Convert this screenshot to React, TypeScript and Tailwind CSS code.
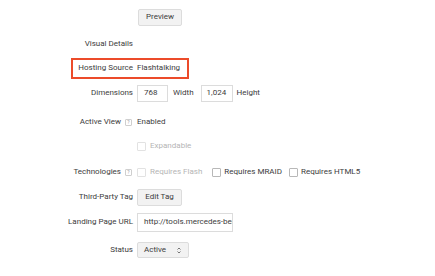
import React from 'react';

const Label: React.FC<{ text: string; help?: boolean }> = ({ text, help }) => (
  <div className="w-[133px] shrink-0 flex items-center justify-end text-[#3c3c3c]">
    <span>{text}</span>
    {help && (
      <span className="ml-[4px] mr-[1px] w-[7px] h-[7px] border border-[#cfcfcf] rounded-[1px] flex items-center justify-center text-[5px] leading-none text-[#999]">
        ?
      </span>
    )}
  </div>
);

const Box: React.FC<{ disabled?: boolean }> = ({ disabled }) => (
  <span
    className={`inline-block w-[9px] h-[9px] rounded-[1px] bg-white border ${
      disabled ? 'border-[#e2e2e2]' : 'border-[#b8b8b8]'
    }`}
  />
);

const Row: React.FC<{ h: string; label?: string; help?: boolean; children?: React.ReactNode }> = ({
  h,
  label,
  help,
  children,
}) => (
  <div className={`flex items-center ${h}`}>
    <Label text={label ?? ''} help={help} />
    <div className="ml-[4px] flex items-center whitespace-nowrap">{children}</div>
  </div>
);

const btn =
  'h-[17px] flex items-center justify-center whitespace-nowrap bg-[#f2f2f2] border border-[#dcdcdc] rounded-[2px] text-[#3c3c3c]';

export default function App() {
  return (
    <div
      className="w-[435px] h-[276px] bg-white overflow-hidden text-[8px] leading-none pt-[4px] text-[#3c3c3c]"
      style={{ fontFamily: 'Roboto, "Liberation Sans", sans-serif' }}
    >
      <Row h="h-[26px]">
        <button className={`${btn} w-[44px] ml-[1px]`}>Preview</button>
      </Row>

      <Row h="h-[28px]" label="Visual Details" />

      <div className="relative">
        <Row h="h-[20px]" label="Hosting Source">
          <span>Flashtalking</span>
        </Row>
        <div className="absolute left-[71px] top-0 w-[118px] h-[21px] border-[2.5px] border-[#ec4b2a]" />
      </div>

      <Row h="h-[30px]" label="Dimensions">
        <div className="w-[31px] h-[17px] border border-[#dcdcdc] bg-white flex items-center pl-[6px]">768</div>
        <span className="ml-[5px]">Width</span>
        <div className="ml-[7px] w-[32px] h-[17px] border border-[#dcdcdc] bg-white flex items-center pl-[5px]">
          1,024
        </div>
        <span className="ml-[4px]">Height</span>
      </Row>

      <Row h="h-[28px]" label="Active View" help>
        <span>Enabled</span>
      </Row>

      <Row h="h-[20px]">
        <Box disabled />
        <span className="ml-[4px] text-[#b5b5b5]">Expandable</span>
      </Row>

      <Row h="h-[32px]" label="Technologies" help>
        <Box disabled />
        <span className="ml-[4px] text-[#b5b5b5]">Requires Flash</span>
        <span className="ml-[10px] flex items-center">
          <Box />
        </span>
        <span className="ml-[3px]">Requires MRAID</span>
        <span className="ml-[7px] flex items-center">
          <Box />
        </span>
        <span className="ml-[3px]">Requires HTML5</span>
      </Row>

      <Row h="h-[18px]" label="Third-Party Tag">
        <button className={`${btn} w-[45px] h-[16px]`}>Edit Tag</button>
      </Row>

      <Row h="h-[32px]" label="Landing Page URL">
        <div className="w-[96px] h-[19px] border border-[#dcdcdc] bg-white flex items-center pl-[6px] overflow-hidden whitespace-nowrap">
          http://tools.mercedes-benz.com
        </div>
      </Row>

      <Row h="h-[24px]" label="Status">
        <div className="w-[52px] h-[16px] border border-[#dcdcdc] bg-[#f2f2f2] rounded-[2px] flex items-center justify-between pl-[6px] pr-[7px]">
          <span>Active</span>
          <svg width="4" height="7" viewBox="0 0 4 7">
            <path d="M0.5 2.5 L2 1 L3.5 2.5 M0.5 4.5 L2 6 L3.5 4.5" fill="none" stroke="#555" strokeWidth="0.8" />
          </svg>
        </div>
      </Row>
    </div>
  );
}
